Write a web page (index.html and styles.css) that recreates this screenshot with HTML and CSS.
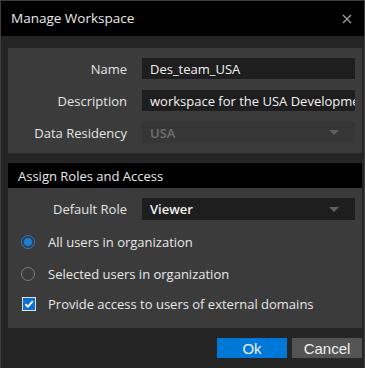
FILE: index.html
```html
<!DOCTYPE html>
<html lang="en">
<head>
    <meta charset="UTF-8">
    <title>Manage Workspace</title>
    <link rel="stylesheet" href="styles.css">
</head>
<body>
    <div class="dialog">
        <div class="titlebar">
            <span class="title">Manage Workspace</span>
            <svg class="close" width="10" height="10" viewBox="0 0 10 10">
                <path d="M1 1 L9 9 M9 1 L1 9" stroke="#9a9a9a" stroke-width="1.4" fill="none"/>
            </svg>
        </div>

        <div class="content">
            <div class="panel form-grid">
                <label class="field-label">Name</label>
                <div class="input">Des_team_USA</div>

                <label class="field-label">Description</label>
                <div class="input input-long">workspace for the USA Development team</div>

                <label class="field-label">Data Residency</label>
                <div class="select disabled">
                    <span>USA</span>
                    <span class="caret"></span>
                </div>
            </div>

            <div class="section-head">Assign Roles and Access</div>
            <div class="panel panel-access">
                <div class="form-grid role-row">
                    <label class="field-label">Default Role</label>
                    <div class="select">
                        <span>Viewer</span>
                        <span class="caret"></span>
                    </div>
                </div>

                <div class="option">
                    <span class="radio checked"></span>
                    <span>All users in organization</span>
                </div>
                <div class="option">
                    <span class="radio"></span>
                    <span>Selected users in organization</span>
                </div>
                <div class="option option-check">
                    <span class="checkbox">
                        <svg width="12" height="12" viewBox="0 0 12 12">
                            <path d="M2.3 6.1 L4.9 8.6 L9.8 3.1" stroke="#fff" stroke-width="1.8" fill="none"/>
                        </svg>
                    </span>
                    <span>Provide access to users of external domains</span>
                </div>
            </div>

            <div class="actions">
                <button class="btn btn-primary">Ok</button>
                <button class="btn">Cancel</button>
            </div>
        </div>
    </div>
</body>
</html>
```

FILE: styles.css
```css
html, body {
    margin: 0;
    padding: 0;
    background: #252525;
}
body {
    font-family: 'Open Sans', 'Noto Sans', sans-serif;
    font-size: 13px;
    color: #e8e8e8;
}
.dialog {
    width: 363px;
    height: 367px;
    border: 1px solid #3e3e3e;
    border-bottom: none;
    background: #252525;
}
.titlebar {
    height: 35px;
    background: #000;
    display: flex;
    align-items: center;
    justify-content: space-between;
    padding: 0 12px 0 10px;
}
.title {
    font-size: 13.5px;
    color: #eaeaea;
    padding-bottom: 2px;
}
.close {
    display: block;
}
.content {
    padding: 12px 2px 0 7px;
}
.panel {
    background: #3b3b3b;
}
.form-grid {
    display: grid;
    grid-template-columns: 119px 1fr;
    column-gap: 15px;
    row-gap: 11px;
    align-items: center;
    padding: 10px 7px 10px 0;
}
.field-label {
    text-align: right;
    color: #e4e4e4;
}
.input, .select {
    height: 21px;
    background: #1e1e1e;
    padding: 0 8px;
    display: flex;
    align-items: center;
    white-space: nowrap;
    overflow: hidden;
    color: #f2f2f2;
}
.input-long {
    padding-right: 2px;
}
.select {
    justify-content: space-between;
    font-weight: 600;
}
.select.disabled {
    background: #363636;
    color: #6f6f6f;
}
.caret {
    width: 0;
    height: 0;
    border-left: 5px solid transparent;
    border-right: 5px solid transparent;
    border-top: 5px solid #606060;
    margin-right: 8px;
}
.section-head {
    margin-top: 10px;
    height: 25px;
    background: #000;
    color: #eaeaea;
    padding-left: 10px;
    display: flex;
    align-items: center;
}
.panel-access {
    padding-bottom: 14px;
}
.role-row {
    padding-bottom: 0;
}
.role-row .select {
    height: 22px;
}
.option {
    display: flex;
    align-items: center;
    height: 20px;
    margin-top: 12px;
    padding-left: 13px;
    gap: 13px;
}
.option-check {
    margin-top: 10px;
    gap: 12px;
}
.radio {
    width: 12px;
    height: 12px;
    border: 1.5px solid #7a7a7a;
    border-radius: 50%;
    position: relative;
}
.radio.checked {
    border-color: #1a7fdc;
}
.radio.checked::after {
    content: '';
    position: absolute;
    left: 2px;
    top: 2px;
    width: 8px;
    height: 8px;
    border-radius: 50%;
    background: #1a7fdc;
}
.checkbox {
    width: 12px;
    height: 12px;
    background: #0a6fd0;
    border: 1px solid #e0e0e0;
    margin-left: 1px;
    display: flex;
}
.checkbox svg {
    display: block;
}
.actions {
    display: flex;
    justify-content: flex-end;
    gap: 5px;
    margin-top: 10px;
}
.btn {
    width: 70px;
    height: 20px;
    border: none;
    padding: 0;
    font-family: 'Liberation Sans', Arial, sans-serif;
    font-size: 15px;
    color: #f0f0f0;
    background: #545454;
}
.btn-primary {
    background: #0078d7;
}
```
